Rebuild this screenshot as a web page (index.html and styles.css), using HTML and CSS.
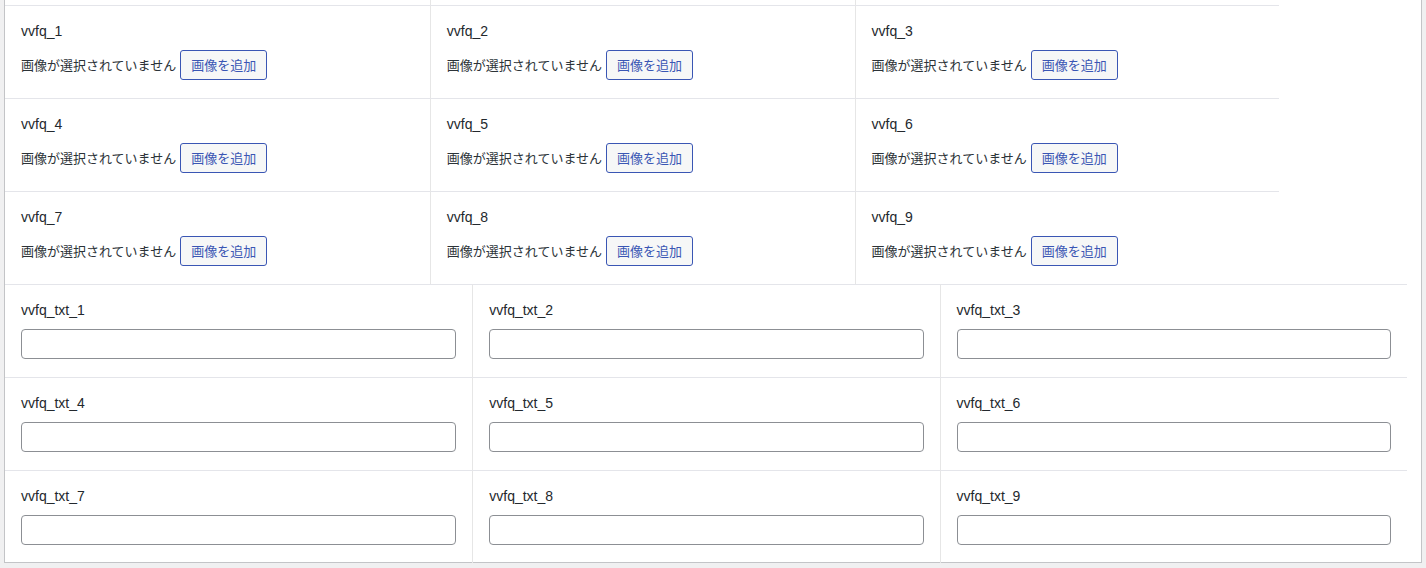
FILE: index.html
```html
<!DOCTYPE html>
<html lang="ja">
<head>
<meta charset="utf-8">
<link rel="stylesheet" href="styles.css">
</head>
<body>
<div class="panel">
  <div class="grid img-grid">
    <div class="cell spacer"></div><div class="cell spacer"></div><div class="cell spacer"></div>
    <div class="cell row"><div class="label">vvfq_1</div><div class="ctrl"><span>画像が選択されていません</span><button class="btn">画像を追加</button></div></div>
    <div class="cell row"><div class="label">vvfq_2</div><div class="ctrl"><span>画像が選択されていません</span><button class="btn">画像を追加</button></div></div>
    <div class="cell row"><div class="label">vvfq_3</div><div class="ctrl"><span>画像が選択されていません</span><button class="btn">画像を追加</button></div></div>
    <div class="cell row"><div class="label">vvfq_4</div><div class="ctrl"><span>画像が選択されていません</span><button class="btn">画像を追加</button></div></div>
    <div class="cell row"><div class="label">vvfq_5</div><div class="ctrl"><span>画像が選択されていません</span><button class="btn">画像を追加</button></div></div>
    <div class="cell row"><div class="label">vvfq_6</div><div class="ctrl"><span>画像が選択されていません</span><button class="btn">画像を追加</button></div></div>
    <div class="cell row"><div class="label">vvfq_7</div><div class="ctrl"><span>画像が選択されていません</span><button class="btn">画像を追加</button></div></div>
    <div class="cell row"><div class="label">vvfq_8</div><div class="ctrl"><span>画像が選択されていません</span><button class="btn">画像を追加</button></div></div>
    <div class="cell row"><div class="label">vvfq_9</div><div class="ctrl"><span>画像が選択されていません</span><button class="btn">画像を追加</button></div></div>
  </div>
  <div class="grid txt-grid">
    <div class="cell row"><div class="label">vvfq_txt_1</div><input class="field" type="text"></div>
    <div class="cell row"><div class="label">vvfq_txt_2</div><input class="field" type="text"></div>
    <div class="cell row"><div class="label">vvfq_txt_3</div><input class="field" type="text"></div>
    <div class="cell row"><div class="label">vvfq_txt_4</div><input class="field" type="text"></div>
    <div class="cell row"><div class="label">vvfq_txt_5</div><input class="field" type="text"></div>
    <div class="cell row"><div class="label">vvfq_txt_6</div><input class="field" type="text"></div>
    <div class="cell row"><div class="label">vvfq_txt_7</div><input class="field" type="text"></div>
    <div class="cell row"><div class="label">vvfq_txt_8</div><input class="field" type="text"></div>
    <div class="cell row"><div class="label">vvfq_txt_9</div><input class="field" type="text"></div>
  </div>
</div>
</body>
</html>
```
FILE: styles.css
```css
html, body {
  margin: 0;
  padding: 0;
  background: #f0f0f1;
}
body {
  padding: 0 4px 4px 4px;
  font-family: "Liberation Sans", "Noto Sans CJK JP", sans-serif;
  font-size: 13px;
  color: #2c3338;
}
.panel {
  background: #fff;
  border: 1px solid #c3c4c7;
  border-top: none;
  height: 563px;
  box-sizing: border-box;
}
.grid {
  display: grid;
  grid-template-columns: repeat(3, 1fr);
}
.img-grid {
  width: 90%;
}
.txt-grid {
  width: 99%;
}
.cell {
  box-sizing: border-box;
  border-left: 1px solid #e6e6e6;
  min-width: 0;
}
.cell:nth-child(3n+1) {
  border-left: none;
}
.spacer {
  height: 5px;
}
.row {
  border-top: 1px solid #e4e5ea;
  height: 93px;
  padding: 16px 16px 0 16px;
}
.label {
  font-size: 14px;
  line-height: 18px;
  height: 18px;
  margin-bottom: 10px;
  color: #23282d;
}
.ctrl {
  display: flex;
  align-items: center;
  gap: 4px;
  line-height: 18px;
  white-space: nowrap;
  font-family: "Noto Sans CJK JP", sans-serif;
}
.btn {
  height: 30px;
  padding: 0 10px;
  border: 1px solid #3a56b4;
  border-radius: 3px;
  background: #f6f7f7;
  color: #3a56b4;
  font-family: "Noto Sans CJK JP", sans-serif;
  font-size: 13px;
  line-height: 28px;
  box-sizing: border-box;
}
.field {
  display: block;
  width: 100%;
  height: 30px;
  box-sizing: border-box;
  border: 1px solid #8c8f94;
  border-radius: 4px;
  background: #fff;
  margin: 0;
  padding: 0 8px;
  font-family: "Liberation Sans", sans-serif;
  font-size: 13px;
}
```
